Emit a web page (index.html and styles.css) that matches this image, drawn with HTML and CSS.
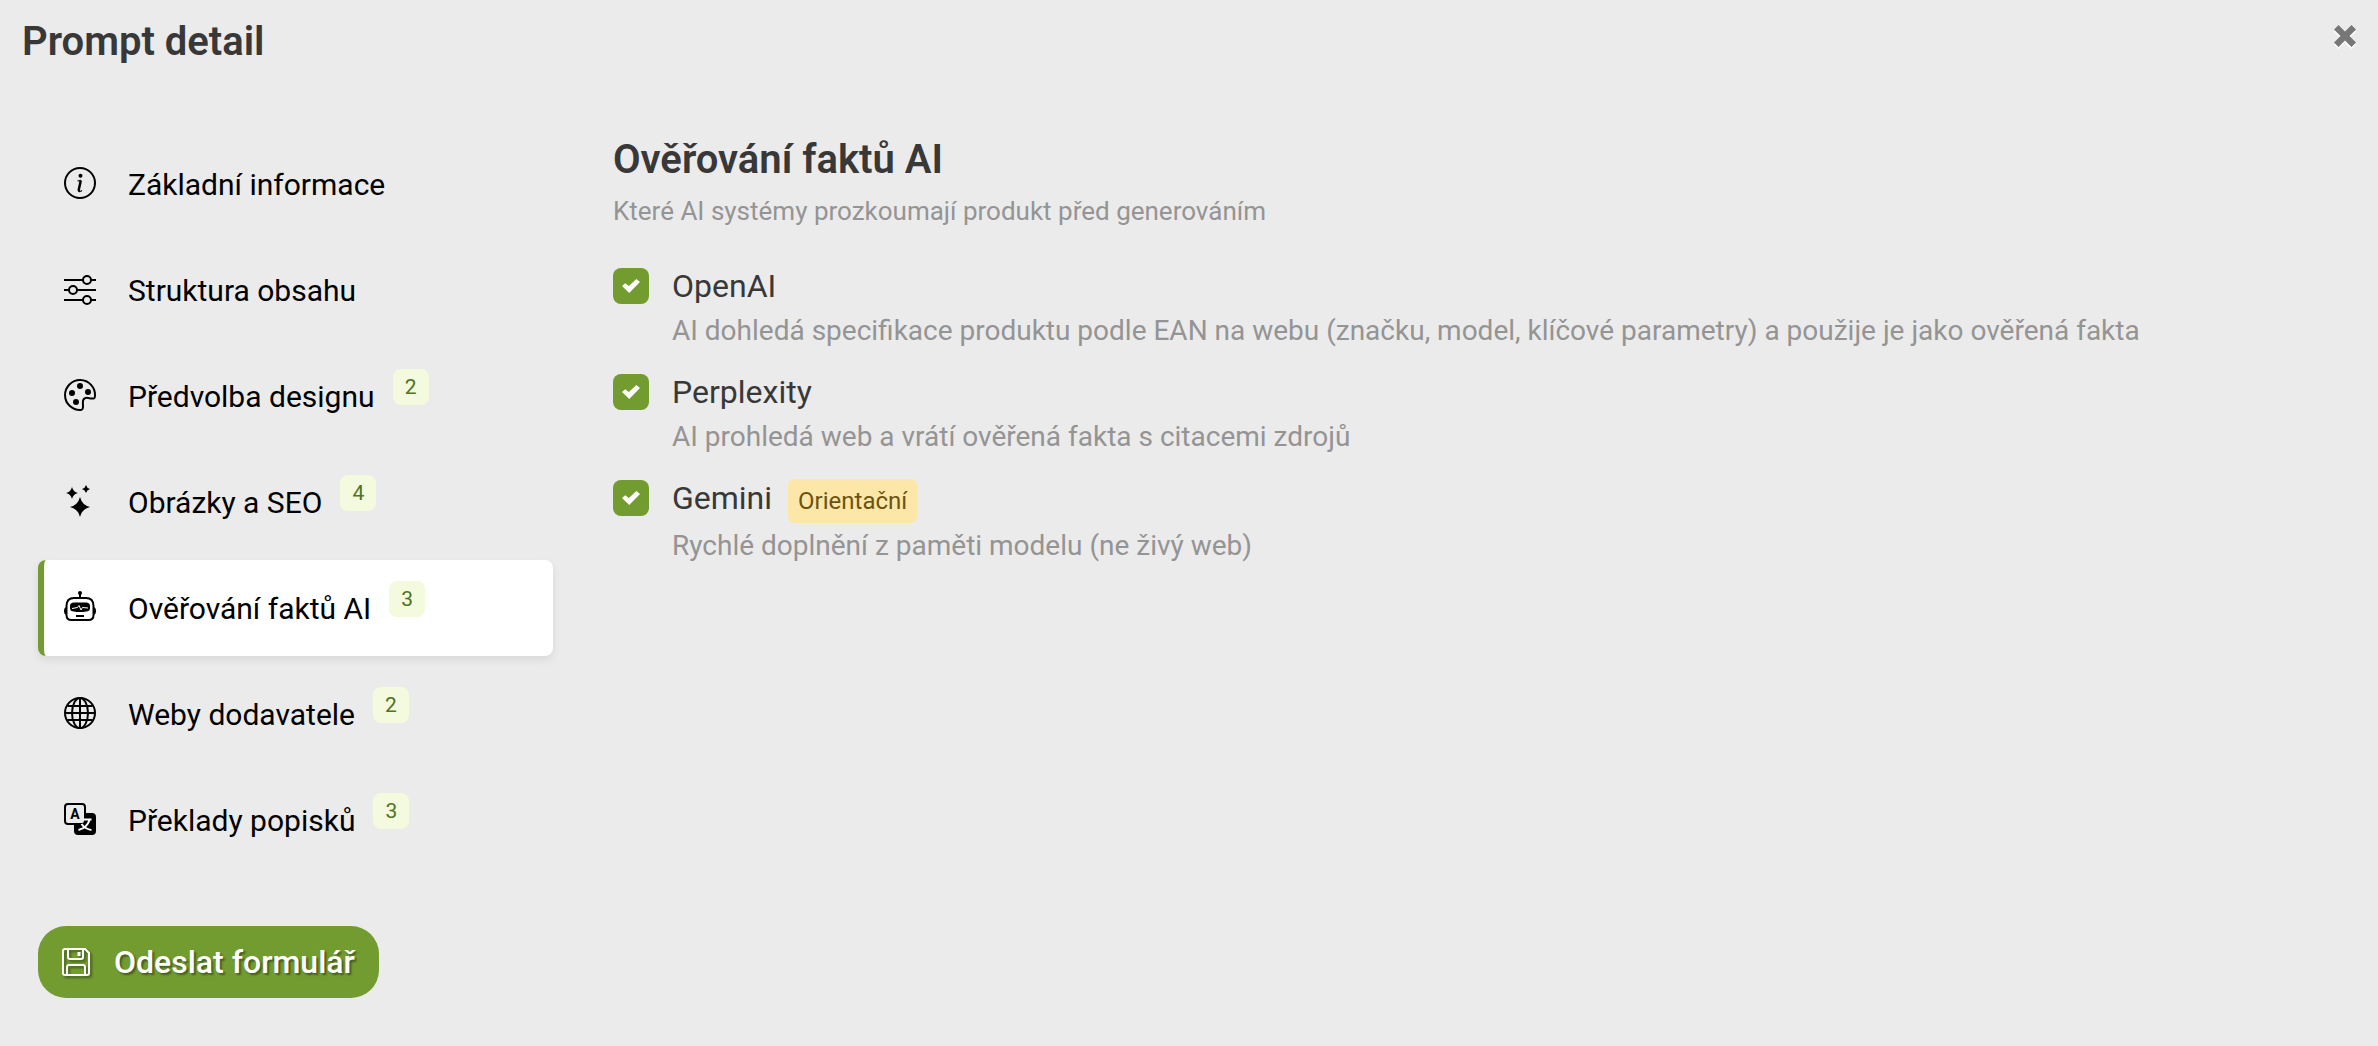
FILE: index.html
```html
<!DOCTYPE html>
<html lang="cs">
<head>
    <meta charset="UTF-8">
    <meta name="viewport" content="width=device-width, initial-scale=1">
    <title>Prompt detail</title>
    <link rel="stylesheet" href="styles.css">
</head>
<body>

<header class="dialog-header">
    <h1>Prompt detail</h1>
    <button type="button" class="close" aria-label="Zavřít">
        <svg viewBox="0 0 22 22"><path d="M4.500 0L11 6.500 17.500 0 22 4.500 15.500 11 22 17.500 17.500 22 11 15.500 4.500 22 0 17.500 6.500 11 0 4.500z"/></svg>
    </button>
</header>

<form class="dialog-body" id="promptForm">
    <div class="sidebar">
        <nav class="menu">
            <a href="#info" class="menu-item">
                <svg class="icon" viewBox="0 0 32 32"><circle cx="16" cy="16" r="15"/><circle class="fill" cx="16.500" cy="8.800" r="2"/><path stroke-width="2.500" d="M16.800 13.500L14.800 22.500Q14.600 24 16 23.900"/><path stroke-width="1.200" d="M13.500 14L17 13.400M15.500 24.500Q17 24.400 18 23.300"/></svg>
                <span>Základní informace</span>
            </a>
            <a href="#struktura" class="menu-item">
                <svg class="icon" viewBox="0 0 32 32"><path d="M0 7H19M27 7H32M0 17H5M13 17H32M0 27H19M27 27H32"/><circle cx="23" cy="7" r="4"/><circle cx="9" cy="17" r="4"/><circle cx="23" cy="27" r="4"/></svg>
                <span>Struktura obsahu</span>
            </a>
            <a href="#design" class="menu-item">
                <svg class="icon" viewBox="0 0 32 32"><path d="M17 31A15 15 0 1 1 31 17C31 19.500 29.500 19.700 27.500 19.500C25 19.200 23.500 18.500 21.500 19C18.500 19.700 18.800 22 18.900 24.500C19 27 19.500 31 17 31Z"/><circle class="fill" cx="16" cy="7" r="3"/><circle class="fill" cx="8" cy="14" r="3"/><circle class="fill" cx="24" cy="13" r="3"/><circle class="fill" cx="12" cy="23" r="3"/></svg>
                <span>Předvolba designu</span>
                <span class="count">2</span>
            </a>
            <a href="#seo" class="menu-item">
                <svg class="icon" viewBox="0 0 32 32"><path class="fill" d="M16 12Q18 20 26 22Q18 24 16 32Q14 24 6 22Q14 20 16 12ZM8 2Q9.200 6.800 14 8Q9.200 9.200 8 14Q6.800 9.200 2 8Q6.800 6.800 8 2ZM22 0Q22.800 3.200 26 4Q22.800 4.800 22 8Q21.200 4.800 18 4Q21.200 3.200 22 0Z"/></svg>
                <span>Obrázky a SEO</span>
                <span class="count">4</span>
            </a>
            <a href="#fakta" class="menu-item active" aria-current="page">
                <svg class="icon" viewBox="0 0 32 32"><path d="M10 7H22Q29.500 7 29.500 15V24Q29.500 29 24.500 29H7.500Q2.500 29 2.500 24V15Q2.500 7 10 7ZM16 2V7"/><circle class="fill" cx="16" cy="2" r="2"/><path class="fill" d="M2.500 16V24Q0 23.500 0 20T2.500 16ZM29.500 16V24Q32 23.500 32 20T29.500 16ZM10 11.500H22Q26 11.500 26 15V17Q26 20.500 22 20.500Q16 21.500 10 20.500Q6 20.500 6 17V15Q6 11.500 10 11.500Z"/><path d="M12 25H20"/><path class="light" d="M8 17.500L13.500 16.500 15 14.500 17 19 18.500 16.500 24 17"/></svg>
                <span>Ověřování faktů AI</span>
                <span class="count">3</span>
            </a>
            <a href="#weby" class="menu-item">
                <svg class="icon" viewBox="0 0 32 32"><circle cx="16" cy="16" r="15"/><ellipse cx="16" cy="16" rx="8" ry="15"/><path d="M16 1V31M1 16H31M3.500 9H28.500M3.500 23H28.500"/></svg>
                <span>Weby dodavatele</span>
                <span class="count">2</span>
            </a>
            <a href="#preklady" class="menu-item">
                <svg class="icon" viewBox="0 0 32 32"><path class="fill" d="M21 10H28Q32 10 32 14V28Q32 32 28 32H14Q10 32 10 28V21H18Q21 21 21 18Z"/><rect x="1" y="1" width="20" height="20" rx="3"/><text x="11" y="16" text-anchor="middle">A</text><path class="light thick" d="M20 16.500H27.500M25.500 17Q23 25 14.500 27M17.500 21Q21 26 27.500 27"/></svg>
                <span>Překlady popisků</span>
                <span class="count">3</span>
            </a>
        </nav>
        <button type="submit" class="submit">
            <svg viewBox="0 0 28 28"><path d="M2 1H23L27 5V25Q27 27 25 27H3Q1 27 1 25V3Q1 1 3 1M6 1V9Q6 11 8 11H19Q21 11 21 9V1M5 27V19Q5 17 7 17H21Q23 17 23 19V27"/><path class="solid" d="M15.500 4H18.500V8H15.500Z"/></svg>
            Odeslat formulář
        </button>
    </div>

    <main class="content">
        <h2>Ověřování faktů AI</h2>
        <p class="subtitle">Které AI systémy prozkoumají produkt před generováním</p>

        <div class="option">
            <input type="checkbox" id="openai" checked>
            <label for="openai">OpenAI</label>
            <p>AI dohledá specifikace produktu podle EAN na webu (značku, model, klíčové parametry) a použije je jako ověřená fakta</p>
        </div>
        <div class="option">
            <input type="checkbox" id="perplexity" checked>
            <label for="perplexity">Perplexity</label>
            <p>AI prohledá web a vrátí ověřená fakta s citacemi zdrojů</p>
        </div>
        <div class="option">
            <input type="checkbox" id="gemini" checked>
            <label for="gemini">Gemini <span class="tag">Orientační</span></label>
            <p>Rychlé doplnění z paměti modelu (ne živý web)</p>
        </div>
    </main>
</form>

</body>
</html>
```

FILE: styles.css
```css
* {
    box-sizing: border-box;
}
body {
    margin: 0;
    font-family: Roboto, "Liberation Sans", sans-serif;
    font-size: 30px;
    color: #383838;
    background-color: #ebebeb;
}
h1, h2, p {
    margin: 0;
}
h1, h2 {
    font-size: 40px;
    font-weight: 600;
    line-height: 48px;
}
button {
    border: 0;
    font-family: inherit;
    cursor: pointer;
}

/* Header */
.dialog-header {
    display: flex;
    justify-content: space-between;
    align-items: flex-start;
    padding: 18px 22px 0;
}
.close {
    padding: 7px 0;
    background: none;
}
.close svg {
    display: block;
    width: 22px;
    height: 22px;
    fill: #777;
    filter: drop-shadow(0 2px 0 #fff);
}

.dialog-body {
    display: flex;
    gap: 60px;
    padding: 70px 38px 48px;
}

/* Left menu */
.sidebar {
    flex: 0 0 515px;
}
.menu {
    display: flex;
    flex-direction: column;
    gap: 10px;
    margin-bottom: 58px;
}
.menu-item {
    display: flex;
    align-items: center;
    height: 96px;
    padding: 0 20px;
    border-left: 6px solid transparent;
    border-radius: 8px;
    color: #000;
    text-decoration: none;
}
.menu-item.active {
    border-left-color: #729b30;
    background: #fff;
    box-shadow: 0 4px 8px rgba(0, 0, 0, 0.08);
}
.icon {
    width: 32px;
    height: 32px;
    margin: 0 32px 2px 0;
    overflow: visible;
    fill: none;
    stroke: #000;
    stroke-width: 2;
}
.icon .fill,
.icon text {
    fill: #000;
    stroke: none;
}
.icon text {
    font-size: 14px;
    font-weight: 700;
}
.icon .light {
    stroke: #fff;
    stroke-width: 1;
}
.icon .thick {
    stroke-width: 2;
}
.count {
    width: 36px;
    height: 36px;
    margin: 0 0 18px 18px;
    border-radius: 8px;
    background: #f3fade;
    color: #4f7320;
    font-size: 21px;
    line-height: 36px;
    text-align: center;
}

.submit {
    display: flex;
    align-items: center;
    gap: 24px;
    height: 72px;
    padding: 0 24px;
    border-radius: 28px;
    background: #729b30;
    color: #fff;
    font-size: 32px;
    font-weight: 500;
    text-shadow: 2px 2px 2px rgba(0, 0, 0, 0.4);
}
.submit svg {
    width: 28px;
    height: 28px;
    fill: none;
    stroke: #fff;
    stroke-width: 2;
    filter: drop-shadow(2px 2px 1px rgba(0, 0, 0, 0.4));
}
.submit .solid {
    fill: #fff;
    stroke: none;
}

/* Options */
.content {
    flex: 1;
}
.subtitle {
    margin: 12px 0 38px;
    color: #949494;
    font-size: 26px;
    line-height: 30px;
}
.option {
    display: grid;
    grid-template-columns: 36px 1fr;
    column-gap: 23px;
    align-items: start;
    margin-bottom: 16px;
}
.option input {
    display: grid;
    place-items: center;
    appearance: none;
    width: 36px;
    height: 36px;
    margin: 4px 0 0;
    border-radius: 8px;
    background: #729b30;
    cursor: pointer;
}
.option input:checked::before {
    content: "";
    width: 18px;
    height: 14px;
    background: #fff;
    clip-path: polygon(0 50%, 18% 30%, 38% 50%, 80% 0, 100% 22%, 40% 100%);
}
.option label {
    display: flex;
    align-items: baseline;
    gap: 16px;
    font-size: 32px;
    line-height: 44px;
}
.option p {
    grid-column: 2;
    color: #949494;
    font-size: 28px;
    line-height: 46px;
}
.tag {
    padding: 0 10px;
    border-radius: 6px;
    background: #fce7a9;
    color: #6b5310;
    font-size: 24px;
}
```
